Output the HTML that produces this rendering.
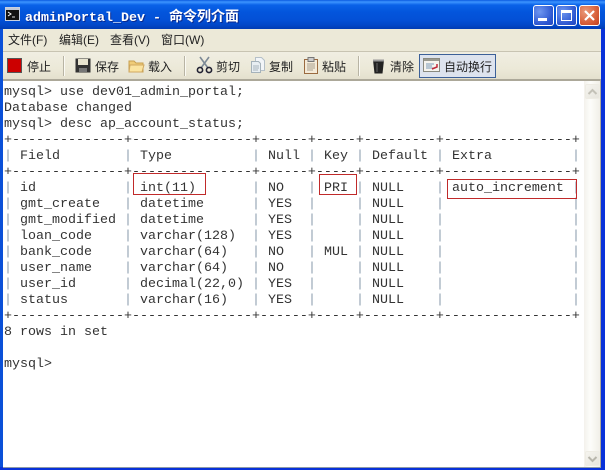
<!DOCTYPE html>
<html><head><meta charset="utf-8">
<style>
html,body{margin:0;padding:0;background:#0831d9}
#w{position:relative;width:605px;height:470px;overflow:hidden;background:#0a3ccf;font-family:"Liberation Sans","WenQuanYi Zen Hei","Noto Sans CJK SC",sans-serif}
#w div,#w span,#w svg{position:absolute}
#title{left:0;top:0;width:605px;height:29px;background:linear-gradient(180deg,#0a5ae0 0,#3d95ff 2px,#0a62e8 5px,#0355dc 12px,#0350d6 20px,#0247c8 25px,#013cb4 29px)}
#tt{left:25px;top:8px;color:#fff;font:bold 13.33px/16px "Liberation Mono","WenQuanYi Zen Hei",monospace;white-space:pre;text-shadow:1px 1px 0 #0a2a90}
#tt i{font-style:normal;font-weight:bold;font-size:14px;letter-spacing:0;font-family:"Noto Sans CJK SC",sans-serif}
#menu{left:3px;top:29px;width:598px;height:22px;background:#ece9d8;border-bottom:1px solid #c8c4b2}
#tool{left:3px;top:52px;width:598px;height:27px;background:linear-gradient(180deg,#f0eee2,#ece9d8 60%,#e4e0ce)}
#line{left:3px;top:79px;width:598px;height:2px;background:#aca899}
.m,.t{font-size:12px;line-height:14px;color:#222;white-space:pre}
.sep{width:1px;height:20px;top:56px;background:#b8b4a4;box-shadow:1px 0 0 #fbfaf4}
#term{left:3px;top:81px;width:581px;height:386px;background:#fff}
pre{position:absolute;margin:0;left:4px;top:85px;font:13.33px/16px "Liberation Mono",monospace;color:#333}
pre b{font-weight:normal;color:#8fa0b0}
#sb{left:584px;top:81px;width:16px;height:386px;background:linear-gradient(90deg,#f3f1ec,#fdfdfa 40%,#f1efe8)}
#rline{left:600px;top:79px;width:1px;height:388px;background:#aca899}
.sbtn{left:585px;width:15px;height:15px;background:linear-gradient(135deg,#f6f5f0,#e6e4dc);border:0;border-radius:2px;box-shadow:inset 0 0 0 1px #eeece4}
.red{border:1px solid #c02a2a;box-sizing:border-box}
#bot{left:0;top:467px;width:605px;height:3px;background:#0831d9}
#botl{left:3px;top:467px;width:598px;height:1px;background:#8d9aa8}
#lb{left:0;top:29px;width:3px;height:441px;background:#0a50d8}
#rb{left:601px;top:29px;width:4px;height:441px;background:#0831d9}
</style></head><body>
<div id="w">
<div id="title"></div>
<svg style="left:5px;top:7px" width="15" height="14" viewBox="0 0 15 14"><rect x=".5" y=".5" width="14" height="13" fill="#111" stroke="#c8d0e0"/><rect x="1" y="1" width="13" height="2" fill="#c0c8d8"/><path d="M3 5l3 2-3 2" stroke="#fff" fill="none"/><path d="M7 10h3" stroke="#ddd"/></svg>
<div id="tt">adminPortal_Dev - <i>命令列介面</i></div>

<div style="left:533px;top:5px;width:21px;height:21px;box-sizing:border-box;border:1px solid #fff;border-radius:3px;background:radial-gradient(circle at 30% 30%,#6f97f0,#2c56d0 70%,#2248c0)"></div>
<div style="left:538px;top:18px;width:9px;height:3px;background:#fff"></div>
<div style="left:556px;top:5px;width:21px;height:21px;box-sizing:border-box;border:1px solid #fff;border-radius:3px;background:radial-gradient(circle at 30% 30%,#6f97f0,#2c56d0 70%,#2248c0)"></div>
<div style="left:561px;top:10px;width:11px;height:11px;box-sizing:border-box;border:1px solid #fff;border-top-width:3px"></div>
<div style="left:579px;top:5px;width:21px;height:21px;box-sizing:border-box;border:1px solid #fff;border-radius:3px;background:radial-gradient(circle at 30% 30%,#ea9a7c,#d8603a 60%,#c04020)"></div>
<svg style="left:579px;top:5px" width="21" height="21"><path d="M6 6l9 9M15 6l-9 9" stroke="#fff" stroke-width="2.2"/></svg>

<div id="menu"></div>
<span class="m" style="left:8px;top:33px">文件(F)</span>
<span class="m" style="left:59px;top:33px">编辑(E)</span>
<span class="m" style="left:110px;top:33px">查看(V)</span>
<span class="m" style="left:161px;top:33px">窗口(W)</span>

<div id="tool"></div>
<div style="left:7px;top:58px;width:15px;height:15px;box-sizing:border-box;border:1px solid #555;background:#cc0000"></div>
<span class="t" style="left:27px;top:60px">停止</span>
<div class="sep" style="left:63px"></div>
<svg style="left:75px;top:58px" width="16" height="15"><path d="M.5.5h15v14H.5z" fill="#333"/><rect x="3" y="1" width="10" height="6" fill="#e8e4d0"/><rect x="4" y="10" width="8" height="4" fill="#777"/></svg>
<span class="t" style="left:95px;top:60px">保存</span>
<svg style="left:128px;top:58px" width="17" height="15"><path d="M1 3h5l2 2h7v9H1z" fill="#f0cc78" stroke="#c8a050"/><path d="M2 7h14l-2 7H1z" fill="#fbe4a0" stroke="#d0a860"/></svg>
<span class="t" style="left:148px;top:60px">载入</span>
<div class="sep" style="left:184px"></div>
<svg style="left:196px;top:56px" width="17" height="18" fill="none"><path d="M4 1l8 11M13 1L5 12" stroke="#7d8a96" stroke-width="1.6"/><circle cx="4" cy="14" r="2.6" stroke="#223" stroke-width="1.6"/><circle cx="13" cy="14" r="2.6" stroke="#223" stroke-width="1.6"/></svg>
<span class="t" style="left:216px;top:60px">剪切</span>
<svg style="left:250px;top:57px" width="16" height="17"><path d="M5.500.5h6l3 3v10h-9z" fill="#f2f5f8" stroke="#b5c0c8"/><path d="M1.500 4.500h7l2 2v9h-9z" fill="#e8eef2" stroke="#a5b2ba"/><path d="M3 9h6M3 11h6M3 13h5" stroke="#a8b4bc"/></svg>
<span class="t" style="left:269px;top:60px">复制</span>
<svg style="left:304px;top:57px" width="14" height="17"><rect x=".5" y="2.500" width="13" height="14" fill="#f4ead8" stroke="#9a6a40"/><rect x="4" y=".5" width="6" height="4" fill="#ccc" stroke="#777"/><path d="M3 7h8M3 9h8M3 11h8M3 13h6" stroke="#a8a090"/></svg>
<span class="t" style="left:322px;top:60px">粘贴</span>
<div class="sep" style="left:358px"></div>
<svg style="left:372px;top:58px" width="13" height="16"><path d="M1 2h11l-1.500 13.500h-8z" fill="#222"/><path d="M1 2.500h11" stroke="#999" stroke-width="2"/><path d="M5 5v9" stroke="#666"/></svg>
<span class="t" style="left:390px;top:60px">清除</span>
<div style="left:419px;top:54px;width:77px;height:24px;box-sizing:border-box;border:1px solid #3c6098;background:#dde3ee"></div>
<svg style="left:423px;top:58px" width="18" height="15"><rect x=".5" y=".5" width="16" height="13" fill="#f6f4ee" stroke="#8a8a80"/><rect x="1" y="1" width="15" height="2" fill="#9a9a90"/><path d="M3 6h8M3 8h6M3 10h8" stroke="#7a9ab8"/><path d="M9 11l5-2v-3" stroke="#c02838" stroke-width="1.500" fill="none"/></svg>
<span class="t" style="left:444px;top:60px">自动换行</span>
<div id="line"></div>

<div id="term"></div>
<pre>mysql&gt; use dev01_admin_portal;
Database changed
mysql&gt; desc ap_account_status;
+--------------+---------------+------+-----+---------+----------------+
<b>|</b> Field        <b>|</b> Type          <b>|</b> Null <b>|</b> Key <b>|</b> Default <b>|</b> Extra          <b>|</b>
+--------------+---------------+------+-----+---------+----------------+
<b>|</b> id           <b>|</b> int(11)       <b>|</b> NO   <b>|</b> PRI <b>|</b> NULL    <b>|</b> auto_increment <b>|</b>
<b>|</b> gmt_create   <b>|</b> datetime      <b>|</b> YES  <b>|</b>     <b>|</b> NULL    <b>|</b>                <b>|</b>
<b>|</b> gmt_modified <b>|</b> datetime      <b>|</b> YES  <b>|</b>     <b>|</b> NULL    <b>|</b>                <b>|</b>
<b>|</b> loan_code    <b>|</b> varchar(128)  <b>|</b> YES  <b>|</b>     <b>|</b> NULL    <b>|</b>                <b>|</b>
<b>|</b> bank_code    <b>|</b> varchar(64)   <b>|</b> NO   <b>|</b> MUL <b>|</b> NULL    <b>|</b>                <b>|</b>
<b>|</b> user_name    <b>|</b> varchar(64)   <b>|</b> NO   <b>|</b>     <b>|</b> NULL    <b>|</b>                <b>|</b>
<b>|</b> user_id      <b>|</b> decimal(22,0) <b>|</b> YES  <b>|</b>     <b>|</b> NULL    <b>|</b>                <b>|</b>
<b>|</b> status       <b>|</b> varchar(16)   <b>|</b> YES  <b>|</b>     <b>|</b> NULL    <b>|</b>                <b>|</b>
+--------------+---------------+------+-----+---------+----------------+
8 rows in set

mysql&gt;</pre>
<div class="red" style="left:133px;top:173px;width:73px;height:22px"></div>
<div class="red" style="left:319px;top:174px;width:38px;height:21px"></div>
<div class="red" style="left:447px;top:179px;width:130px;height:20px"></div>

<div id="sb"></div>
<div class="sbtn" style="top:84px"></div>
<svg style="left:587px;top:88px" width="11" height="8"><path d="M1.500 6l4-4 4 4" stroke="#c4c2b8" stroke-width="2" fill="none"/></svg>
<div class="sbtn" style="top:451px"></div>
<svg style="left:587px;top:455px" width="11" height="8"><path d="M1.500 2l4 4 4-4" stroke="#b8b6ac" stroke-width="2" fill="none"/></svg>
<div id="rline"></div>
<div id="lb"></div>
<div id="rb"></div>
<div id="bot"></div>
<div id="botl"></div>
</div>
</body></html>
